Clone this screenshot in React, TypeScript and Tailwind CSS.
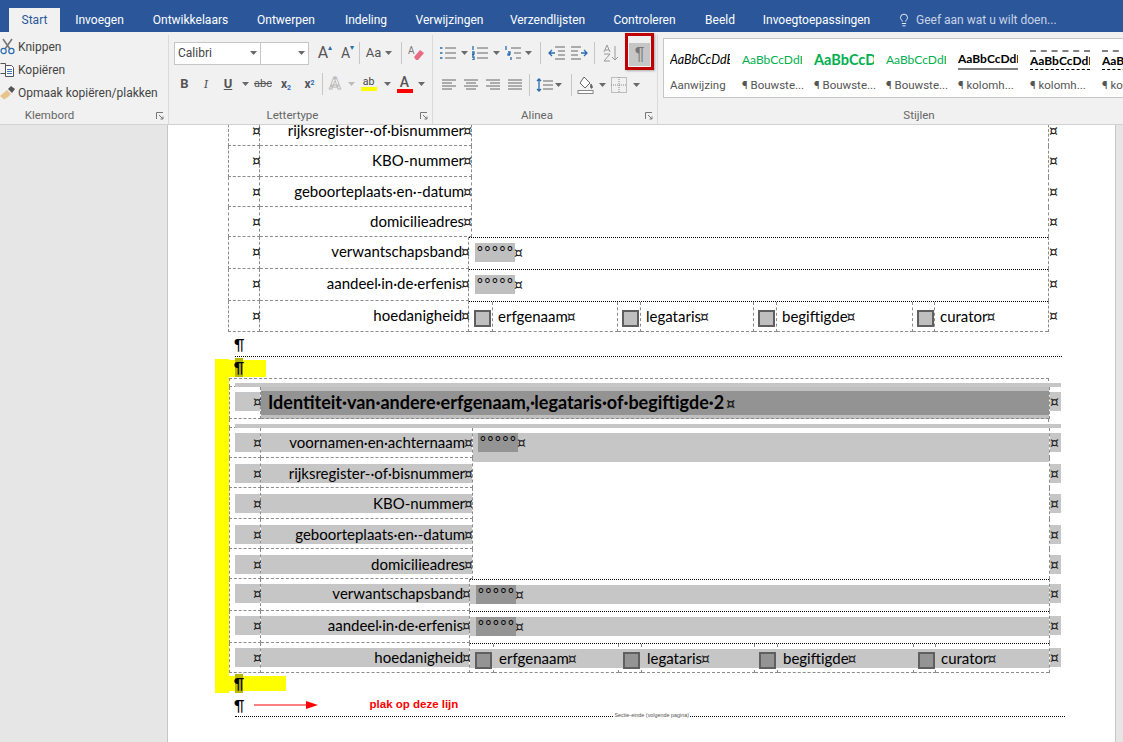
import React from "react";
import { Lightbulb } from "lucide-react";

const tabs = [
  ["Invoegen", "w-[79px]"],
  ["Ontwikkelaars", "w-[103px]"],
  ["Ontwerpen", "w-[88px]"],
  ["Indeling", "w-[72px]"],
  ["Verwijzingen", "w-[95px]"],
  ["Verzendlijsten", "w-[101px]"],
  ["Controleren", "w-[93px]"],
  ["Beeld", "w-[58px]"],
  ["Invoegtoepassingen", "w-[135px]"],
];

const Caret = ({ c = "#6a6a6a" }: { c?: string }) => (
  <svg width="7" height="4" viewBox="0 0 7 4" className="shrink-0"><path d="M0 0h7L3.5 4z" fill={c} /></svg>
);
const Slot = ({ w, children }: { w: string; children?: React.ReactNode }) => (
  <div className={`${w} h-[22px] flex items-center justify-center shrink-0`}>{children}</div>
);
const Sep = () => <div className="w-px h-[22px] bg-[#c6c6c6] shrink-0" />;
const Launcher = () => (
  <svg width="8" height="8" viewBox="0 0 8 8" fill="none" stroke="#777"><path d="M.5 7V.5H7" /><path d="M3 3l4 4M7 4.5V7H4.5" /></svg>
);

const Lines = ({ d, b }: { d: string; b?: string }) => (
  <svg width="17" height="14" viewBox="0 0 17 14" fill="none" className="shrink-0">
    <path d={d} stroke="#666" />
    {b && <path d={b} stroke="#2b6cb0" strokeWidth="1.3" />}
  </svg>
);

const Scissors = () => (
  <svg width="15" height="17" viewBox="0 0 15 17" fill="none">
    <path d="M3 1l7 10M12 1L5 11" stroke="#777" strokeWidth="1.6" />
    <circle cx="3.6" cy="13" r="2.6" stroke="#2b6cb0" strokeWidth="1.2" />
    <circle cx="11.4" cy="13" r="2.6" stroke="#2b6cb0" strokeWidth="1.2" />
  </svg>
);
const CopyIcon = () => (
  <svg width="15" height="15" viewBox="0 0 15 15" fill="none" stroke="#555">
    <path d="M.5 1.5h5v10h-5" />
    <path d="M5.5 3.5h6l2 2v9h-8z" fill="#fff" />
    <path d="M7 7.5h5M7 9.5h5M7 11.5h5" stroke="#3b78b5" />
  </svg>
);
const Brush = () => (
  <svg width="16" height="15" viewBox="0 0 16 15">
    <path d="M0 11L7 5l4 4-3 3-4 2.5z" fill="#e6c48c" />
    <path d="M8 4l3-3 4 3-3 4z" fill="#555" />
  </svg>
);
const Eraser = () => (
  <svg width="17" height="16" viewBox="0 0 17 16">
    <text x="0" y="9" fontSize="10" fill="#777" fontFamily="Roboto, sans-serif">A</text>
    <path d="M6 12l6-7 4 3-6 7H8z" fill="#e86a83" />
  </svg>
);
const Fill = () => (
  <svg width="18" height="18" viewBox="0 0 18 18" fill="none" stroke="#666">
    <path d="M7 1l6 6-5 5-5-5z" fill="#fff" />
    <path d="M14 8c1 2 2 3 1 4s-2-1-1-4z" fill="#666" />
    <rect x="1" y="14.5" width="15" height="3" fill="#fff" stroke="#888" />
  </svg>
);
const Borders = () => (
  <svg width="16" height="16" viewBox="0 0 16 16" fill="none" stroke="#888" strokeDasharray="1 1">
    <rect x=".5" y=".5" width="15" height="15" /><path d="M8 0v16M0 8h16" />
  </svg>
);

const ClipRow = ({ icon, children }: { icon: React.ReactNode; children: React.ReactNode }) => (
  <div className="h-[23px] flex items-center">
    <div className="w-[18px] flex justify-start -ml-[1px] shrink-0">{icon}</div>
    <span className="text-[12px] text-[#444]">{children}</span>
  </div>
);

const GroupLabel = ({ children, launcher, pr = "" }: { children: React.ReactNode; launcher?: boolean; pr?: string }) => (
  <div className={`h-[16px] flex items-center relative ${pr}`}>
    <div className="flex-1 text-center text-[11.5px] text-[#666]">{children}</div>
    {launcher && <div className="absolute right-[4px] top-[4px] flex"><Launcher /></div>}
  </div>
);

const styles = [
  { s: "AaBbCcDdE", c: "italic text-black text-[12.5px]", l: "Aanwijzing", x: "" },
  { s: "AaBbCcDdE", c: "text-[#00b050] text-[12px]", l: "¶ Bouwste...", x: "" },
  { s: "AaBbCcD", c: "text-[#00b050] font-bold text-[14.5px]", l: "¶ Bouwste...", x: "" },
  { s: "AaBbCcDdE", c: "text-[#00b050] text-[12px]", l: "¶ Bouwste...", x: "" },
  { s: "AaBbCcDdE", c: "text-black font-bold text-[12px]", l: "¶ kolomh...", x: "border-b-2 border-[#808080]" },
  { s: "AaBbCcDdE", c: "text-black font-bold text-[12px]", l: "¶ kolomh...", x: "border-t-2 border-t-[#808080] border-b border-dashed border-b-black" },
  { s: "AaBbCcDdE", c: "text-black font-bold text-[12px]", l: "¶ kolomh...", x: "border-t-2 border-t-[#808080] border-b border-dashed border-b-black" },
];

const Ribbon = () => (
  <div className="h-[93px] bg-[#f1f1f1] border-b border-[#d2d2d2] flex font-['Roboto',sans-serif] overflow-hidden">
    {/* Klembord */}
    <div className="w-[169px] shrink-0 flex flex-col border-r border-[#dadada] mt-[3px]">
      <div className="flex-1 pl-[1px]">
        <ClipRow icon={<Scissors />}>Knippen</ClipRow>
        <ClipRow icon={<CopyIcon />}>Kopiëren</ClipRow>
        <ClipRow icon={<Brush />}>Opmaak kopiëren/plakken</ClipRow>
      </div>
      <GroupLabel launcher pr="pr-[69px]">Klembord</GroupLabel>
    </div>
    {/* Lettertype */}
    <div className="w-[264px] shrink-0 flex flex-col border-r border-[#dadada] mt-[3px]">
      <div className="flex-1 pl-[5px] pt-[7px]">
        <div className="flex items-center h-[22px]">
          <div className="w-[87px] h-[23px] bg-white border border-[#c6c6c6] flex items-center justify-between px-[3px] shrink-0">
            <span className="text-[12px] text-[#444]">Calibri</span><Caret />
          </div>
          <div className="w-[49px] h-[23px] bg-white border border-[#c6c6c6] -ml-px mr-[5px] flex items-center justify-end px-[3px] shrink-0"><Caret /></div>
          <Slot w="w-[22px]"><span className="text-[16px] text-[#555] leading-none">A</span><span className="text-[#2b6cb0] text-[8px] leading-none mb-[10px]">▴</span></Slot>
          <Slot w="w-[23px]"><span className="text-[14px] text-[#555] leading-none">A</span><span className="text-[#2b6cb0] text-[8px] leading-none mb-[10px]">▾</span></Slot>
          <Sep />
          <div className="w-[2px] shrink-0" />
          <Slot w="w-[23px]"><span className="text-[13px] text-[#555]">Aa</span></Slot>
          <Slot w="w-[7px]"><Caret /></Slot>
          <div className="w-[9px] shrink-0" />
          <Sep />
          <Slot w="w-[29px]"><Eraser /></Slot>
        </div>
        <div className="flex items-center h-[22px] mt-[9px] text-[#555]">
          <Slot w="w-[21px]"><b className="text-[13px]">B</b></Slot>
          <Slot w="w-[22px]"><i className="text-[13px] font-serif">I</i></Slot>
          <Slot w="w-[22px]"><span className="text-[13px] font-bold underline">U</span></Slot>
          <Slot w="w-[12px]"><Caret /></Slot>
          <Slot w="w-[24px]"><span className="text-[11px] line-through">abc</span></Slot>
          <Slot w="w-[22px]"><b className="text-[12px]">x<sub className="text-[7px] text-[#2b6cb0]">2</sub></b></Slot>
          <Slot w="w-[25px]"><b className="text-[12px]">x<sup className="text-[7px] text-[#2b6cb0]">2</sup></b></Slot>
          <Sep />
          <Slot w="w-[24px]"><span className="text-[17px] text-white font-bold [-webkit-text-stroke:1px_#bbb]">A</span></Slot>
          <Slot w="w-[8px]"><Caret c="#bbb" /></Slot>
          <Slot w="w-[27px]">
            <div className="flex flex-col items-center leading-none relative">
              <span className="text-[10.5px] text-[#444]">ab</span><div className="w-[16px] h-[4px] bg-[#ffff00]" />
            </div>
          </Slot>
          <Slot w="w-[10px]"><Caret /></Slot>
          <Slot w="w-[25px]">
            <div className="flex flex-col items-center leading-none">
              <span className="text-[14px] font-medium">A</span><div className="w-[16px] h-[4px] bg-[#ff0000]" />
            </div>
          </Slot>
          <Slot w="w-[8px]"><Caret /></Slot>
        </div>
      </div>
      <GroupLabel launcher pr="pr-[16px]">Lettertype</GroupLabel>
    </div>
    {/* Alinea */}
    <div className="w-[225px] shrink-0 flex flex-col border-r border-[#dadada] mt-[3px]">
      <div className="flex-1 pl-[5px] pt-[7px]">
        <div className="flex items-center h-[22px]">
          <Slot w="w-[20px]"><Lines d="M5 2h11M5 7h11M5 12h11" b="M0 2h2.5M0 7h2.5M0 12h2.5" /></Slot>
          <Slot w="w-[12px]"><Caret /></Slot>
          <Slot w="w-[20px]"><Lines d="M5 2h11M5 7h11M5 12h11" b="M1 0v4M0 6h2v2H0v1h2M0 11h2v3H0" /></Slot>
          <Slot w="w-[12px]"><Caret /></Slot>
          <Slot w="w-[22px]"><Lines d="M6 2h10M9 7h7M11 12h5" b="M1 0v4M3 6h2v2H3v1h2M6 11v3" /></Slot>
          <Slot w="w-[8px]"><Caret /></Slot>
          <div className="w-[8px] shrink-0" />
          <Sep />
          <div className="w-[4px] shrink-0" />
          <Slot w="w-[22px]"><Lines d="M7 1h10M10 5h7M10 9h7M7 13h10" b="M7 7H1M4 4L1 7l3 3" /></Slot>
          <div className="w-px shrink-0" />
          <Slot w="w-[22px]"><Lines d="M0 1h10M0 5h7M0 9h7M0 13h10" b="M10 7h6M13 4l3 3-3 3" /></Slot>
          <div className="w-[4px] shrink-0" />
          <Sep />
          <Slot w="w-[30px]">
            <svg width="15" height="18" viewBox="0 0 15 18" fill="none" stroke="#999"><path d="M1 8l3-7 3 7M2 6h4M1 10h6l-6 7h6M12 2v14M9 13l3 3 3-3" /></svg>
          </Slot>
          <div className="w-[29px] h-[37px] -mt-[9px] -mb-[6px] shrink-0 border-[3px] border-[#c00000] bg-[#f1f1f1] shadow-[1px_1px_2px_#aaa] flex items-center justify-center px-[1px] pt-[7px] pb-[1px]">
            <div className="w-full h-full bg-[#c6c6c6] flex items-center justify-center text-[18px] text-[#777] font-['Liberation_Sans',sans-serif]">¶</div>
          </div>
        </div>
        <div className="flex items-center h-[22px] mt-[10px]">
          <Slot w="w-[22px]"><Lines d="M1 2h14M1 5h10M1 8h14M1 11h10" /></Slot>
          <Slot w="w-[22px]"><Lines d="M1 2h14M3 5h10M1 8h14M3 11h10" /></Slot>
          <Slot w="w-[22px]"><Lines d="M1 2h14M5 5h10M1 8h14M5 11h10" /></Slot>
          <Slot w="w-[22px]"><Lines d="M1 2h14M1 5h14M1 8h14M1 11h14" /></Slot>
          <div className="w-[3px] shrink-0" />
          <Sep />
          <div className="w-[3px] shrink-0" />
          <Slot w="w-[22px]"><Lines d="M7 3h10M7 7h10M7 11h10" b="M3 1v12M1 3l2-2 2 2M1 11l2 2 2-2" /></Slot>
          <Slot w="w-[7px]"><Caret /></Slot>
          <div className="w-[9px] shrink-0" />
          <Sep />
          <Slot w="w-[27px]"><Fill /></Slot>
          <Slot w="w-[7px]"><Caret /></Slot>
          <Slot w="w-[26px]"><Borders /></Slot>
          <Slot w="w-[8px]"><Caret /></Slot>
        </div>
      </div>
      <GroupLabel launcher pr="pr-[16px]">Alinea</GroupLabel>
    </div>
    {/* Stijlen */}
    <div className="flex-1 min-w-0 flex flex-col pl-[5px] mt-[3px]">
      <div className="h-[60px] mt-[3px] bg-white border border-[#c6c6c6] border-r-0 flex pl-[6px] overflow-hidden">
        {styles.map((st, i) => (
          <div key={i} className="w-[72px] shrink-0 flex flex-col">
            <div className={`w-[60px] h-[20px] mt-[11px] flex items-center overflow-hidden whitespace-nowrap font-['Lato',sans-serif] ${st.x}`}>
              <span className={st.c}>{st.s}</span>
            </div>
            <div className="w-[66px] mt-[7px] text-[11.5px] text-[#555] whitespace-nowrap overflow-hidden">{st.l}</div>
          </div>
        ))}
      </div>
      <div className="flex-1" />
      <GroupLabel pr="pl-[52px]">Stijlen</GroupLabel>
    </div>
  </div>
);

const LIGHT = "bg-[#c6c6c6]";
const Band = ({ hl, className = "", children }: { hl?: boolean; className?: string; children?: React.ReactNode }) => (
  <div className={`h-[19px] leading-[19px] whitespace-nowrap ${hl ? LIGHT : ""} ${className}`}>{children}</div>
);
const Cur = ({ m = "" }: { m?: string }) => (
  <span className={`inline-block text-[14px] leading-[14px] text-[#222] font-['DejaVu_Sans',sans-serif] -mx-[1px] ${m}`}>¤</span>
);

const Field = ({ hl }: { hl?: boolean }) => (
  <div className={`w-[40px] h-[19px] pl-[2px] leading-[16px] text-[14px] tracking-[1.7px] overflow-hidden shrink-0 ${hl ? "bg-[#949494]" : "bg-[#bfbfbf]"}`}>°°°°°</div>
);
const Box = ({ hl }: { hl?: boolean }) => (
  <div className={`w-[17px] h-[17px] border-2 border-[#5f5f5f] shrink-0 mt-[3px] ${hl ? "bg-[#949494]" : "bg-[#bfbfbf]"}`} />
);

const boxes = [
  ["erfgenaam", "w-[24px] pl-[6px]", "w-[125px] border-r"],
  ["legataris", "w-[23px] pl-[5px]", "w-[113px] border-r"],
  ["begiftigde", "w-[23px] pl-[5px]", "w-[136px] border-r"],
  ["curator", "w-[22px] pl-[5px]", "w-[113px]"],
];

type RowP = {
  label: string; h: string; pt: string; hl?: boolean;
  kind?: "merged" | "field" | "boxes" | "tall";
};
const dash = "border-dashed border-[#8c8c8c]";
const Row = ({ label, h, pt, hl, kind = "merged" }: RowP) => {
  const narrow = kind === "field" || kind === "boxes";
  return (
    <div className={`flex ${h}`}>
      <div className={`w-[32px] shrink-0 border-l border-r border-b ${dash} pl-[5px] ${pt}`}>
        <Band hl={hl} className="text-right"><Cur m="-mr-[2px]" /></Band>
      </div>
      <div className={`${narrow ? "w-[209px]" : "w-[212px]"} shrink-0 border-r border-b ${dash} ${pt}`}>
        <Band hl={hl} className="text-right">{label}<Cur m={narrow ? "-mr-[2px]" : "-mr-[1px]"} /></Band>
      </div>
      <div className={`flex-1 min-w-0 ${narrow ? "border-t border-dotted border-t-black" : ""}`}>
        {kind === "boxes" ? (
          <div className="flex h-full">
            {boxes.map(([t, a, b]) => (
              <React.Fragment key={t}>
                <div className={`${a} shrink-0 border-r border-b ${dash} ${pt}`}>
                  <Band hl={hl} className="-ml-[6px] -mr-px pl-[5px] flex"><Box hl={hl} /></Band>
                </div>
                <div className={`${b} shrink-0 border-b ${dash} ${pt}`}>
                  <Band hl={hl} className="pl-[5px]">{t}<Cur /></Band>
                </div>
              </React.Fragment>
            ))}
          </div>
        ) : kind === "field" ? (
          <div className={pt}>
            <Band hl={hl} className="pl-[6px] flex"><Field hl={hl} /><Cur m="mt-[3px]" /></Band>
          </div>
        ) : kind === "tall" ? (
          <div className={pt}>
            <div className={`h-[29px] leading-[19px] ${LIGHT} pl-[5px] flex items-start`}><Field hl={hl} /><Cur m="mt-[3px]" /></div>
          </div>
        ) : null}
      </div>
      <div className={`w-[12px] shrink-0 border-l ${dash} ${pt} -mr-[12px]`}>
        <Band hl={hl} className="pl-[1px]"><Cur /></Band>
      </div>
    </div>
  );
};

const Para = () => <span className="text-[15px] text-black leading-none">¶</span>;

const Dotted = ({ w }: { w: string }) => <div className={`${w} h-0 border-t border-dotted border-black`} />;

export default function App() {
  return (
    <div className="w-[1123px] h-[742px] overflow-hidden flex flex-col bg-[#e6e6e6]">
      <div className="h-[32px] bg-[#2b579a] flex items-end pl-[9px] text-[12px] font-['Roboto',sans-serif] text-white shrink-0">
        <div className="w-[51px] h-[24px] bg-[#f1f1f1] text-[#2b579a] flex items-center justify-center">Start</div>
        {tabs.map(([t, w]) => (
          <div key={t} className={`${w} h-[24px] flex items-center justify-center`}>{t}</div>
        ))}
        <div className="h-[24px] flex items-center ml-[13px] text-[#c8d3e6] gap-[5px]">
          <Lightbulb size={14} strokeWidth={1.5} color="#fff" />
          <span>Geef aan wat u wilt doen...</span>
        </div>
      </div>
      <div className="shrink-0"><Ribbon /></div>
      <div className="flex-1 min-h-0 flex pl-[167px]">
        <div className="w-[949px] border-l border-r border-[#c6c6c6] bg-white overflow-hidden font-['Lato',sans-serif] text-[15px] text-black">
          <div className="-mt-[10px] pl-[60px]">
            <div className="w-[820px]">
              <Row label="rijksregister-·of·bisnummer" h="h-[31px]" pt="pt-[6px]" />
              <Row label="KBO-nummer" h="h-[31px]" pt="pt-[5px]" />
              <Row label="geboorteplaats·en·-datum" h="h-[30px]" pt="pt-[5px]" />
              <Row label="domicilieadres" h="h-[30px]" pt="pt-[5px]" />
              <Row label="verwantschapsband" h="h-[32px]" pt="pt-[5px]" kind="field" />
              <Row label="aandeel·in·de·erfenis" h="h-[32px]" pt="pt-[5px]" kind="field" />
              <Row label="hoedanigheid" h="h-[31px]" pt="pt-[5px]" kind="boxes" />
            </div>
            <div className="h-[24px] pl-[6px] flex items-center pt-[1px]"><Para /></div>
            <div className="ml-[7px]"><Dotted w="w-[827px]" /></div>
            {/* yellow section */}
            <div className="flex mt-[2px] -ml-[13px]">
              <div className="w-[14px] h-[334px] bg-[#ffff00] shrink-0" />
              <div className="flex-1 min-w-0">
                <div className="h-[19px] flex">
                  <div className="w-[37px] h-[17px] mt-[1px] bg-[#ffff00] pl-[6px] flex">
                    <div className="w-[8px] h-[19px] -mt-[2px] bg-[#b8b800] flex items-center justify-center"><Para /></div>
                  </div>
                </div>
                <div className="w-[820px]">
                  {/* header of table 2 */}
                  <div className={`h-[9px] border-t border-l border-r border-b ${dash} pl-[5px] pt-[4px]`}>
                    <div className={`w-[826px] h-[4px] ${LIGHT}`} />
                  </div>
                  <div className="flex h-[32px]">
                    <div className={`w-[32px] shrink-0 border-l border-r border-b ${dash} pl-[5px] pt-[5px]`}>
                      <Band hl className="text-right"><Cur m="-mr-[2px]" /></Band>
                    </div>
                    <div className={`flex-1 min-w-0 border-b ${dash} bg-[#c0c0c0] pt-[4px]`}>
                      <div className="h-[24px] bg-[#939393] pl-[7px] leading-[23px] font-bold text-[18px] whitespace-nowrap">Identiteit·van·andere·erfgenaam,·legataris·of·begiftigde·2<Cur m="ml-[2px] font-bold" /></div>
                    </div>
                    <div className={`w-[12px] shrink-0 border-l ${dash} pt-[5px] -mr-[12px]`}>
                      <Band hl className="pl-[1px]"><Cur /></Band>
                    </div>
                  </div>
                  <div className={`h-[9px] border-l border-r border-b ${dash} pl-[5px] pt-[5px]`}>
                    <div className={`w-[826px] h-[4px] ${LIGHT}`} />
                  </div>
                  <Row hl label="voornamen·en·achternaam" h="h-[30px]" pt="pt-[5px]" kind="tall" />
                  <Row hl label="rijksregister-·of·bisnummer" h="h-[30px]" pt="pt-[6px]" />
                  <Row hl label="KBO-nummer" h="h-[31px]" pt="pt-[6px]" />
                  <Row hl label="geboorteplaats·en·-datum" h="h-[30px]" pt="pt-[6px]" />
                  <Row hl label="domicilieadres" h="h-[30px]" pt="pt-[6px]" />
                  <Row hl label="verwantschapsband" h="h-[32px]" pt="pt-[5px]" kind="field" />
                  <Row hl label="aandeel·in·de·erfenis" h="h-[32px]" pt="pt-[5px]" kind="field" />
                  <Row hl label="hoedanigheid" h="h-[30px]" pt="pt-[5px]" kind="boxes" />
                </div>
                <div className="w-[57px] h-[15px] mt-[3px] bg-[#ffff00] pl-[6px] flex">
                  <div className="w-[8px] h-[19px] -mt-[2px] bg-[#b8b800] flex items-center justify-center"><Para /></div>
                </div>
              </div>
            </div>
            {/* paste hint */}
            <div className="h-[23px] pl-[6px] pt-[1px] flex items-center">
              <Para />
              <svg className="ml-[9px]" width="64" height="8" viewBox="0 0 64 8">
                <path d="M0 4h54" stroke="#ff0000" strokeWidth="1" /><path d="M52 0l12 4-12 4z" fill="#ff0000" />
              </svg>
              <span className="ml-[52px] text-[11.5px] font-bold text-[#ff0000] font-['Liberation_Sans',sans-serif]">plak op deze lijn</span>
            </div>
            <div className="ml-[7px] w-[830px] flex items-center -mt-[3px] h-[6px]">
              <Dotted w="flex-1" />
              <span className="mx-[1px] text-[5.4px] leading-none text-[#555] font-['Liberation_Sans',sans-serif]">Sectie-einde (volgende pagina)</span>
              <Dotted w="w-[375px]" />
            </div>
          </div>
        </div>
      </div>
    </div>
  );
}
